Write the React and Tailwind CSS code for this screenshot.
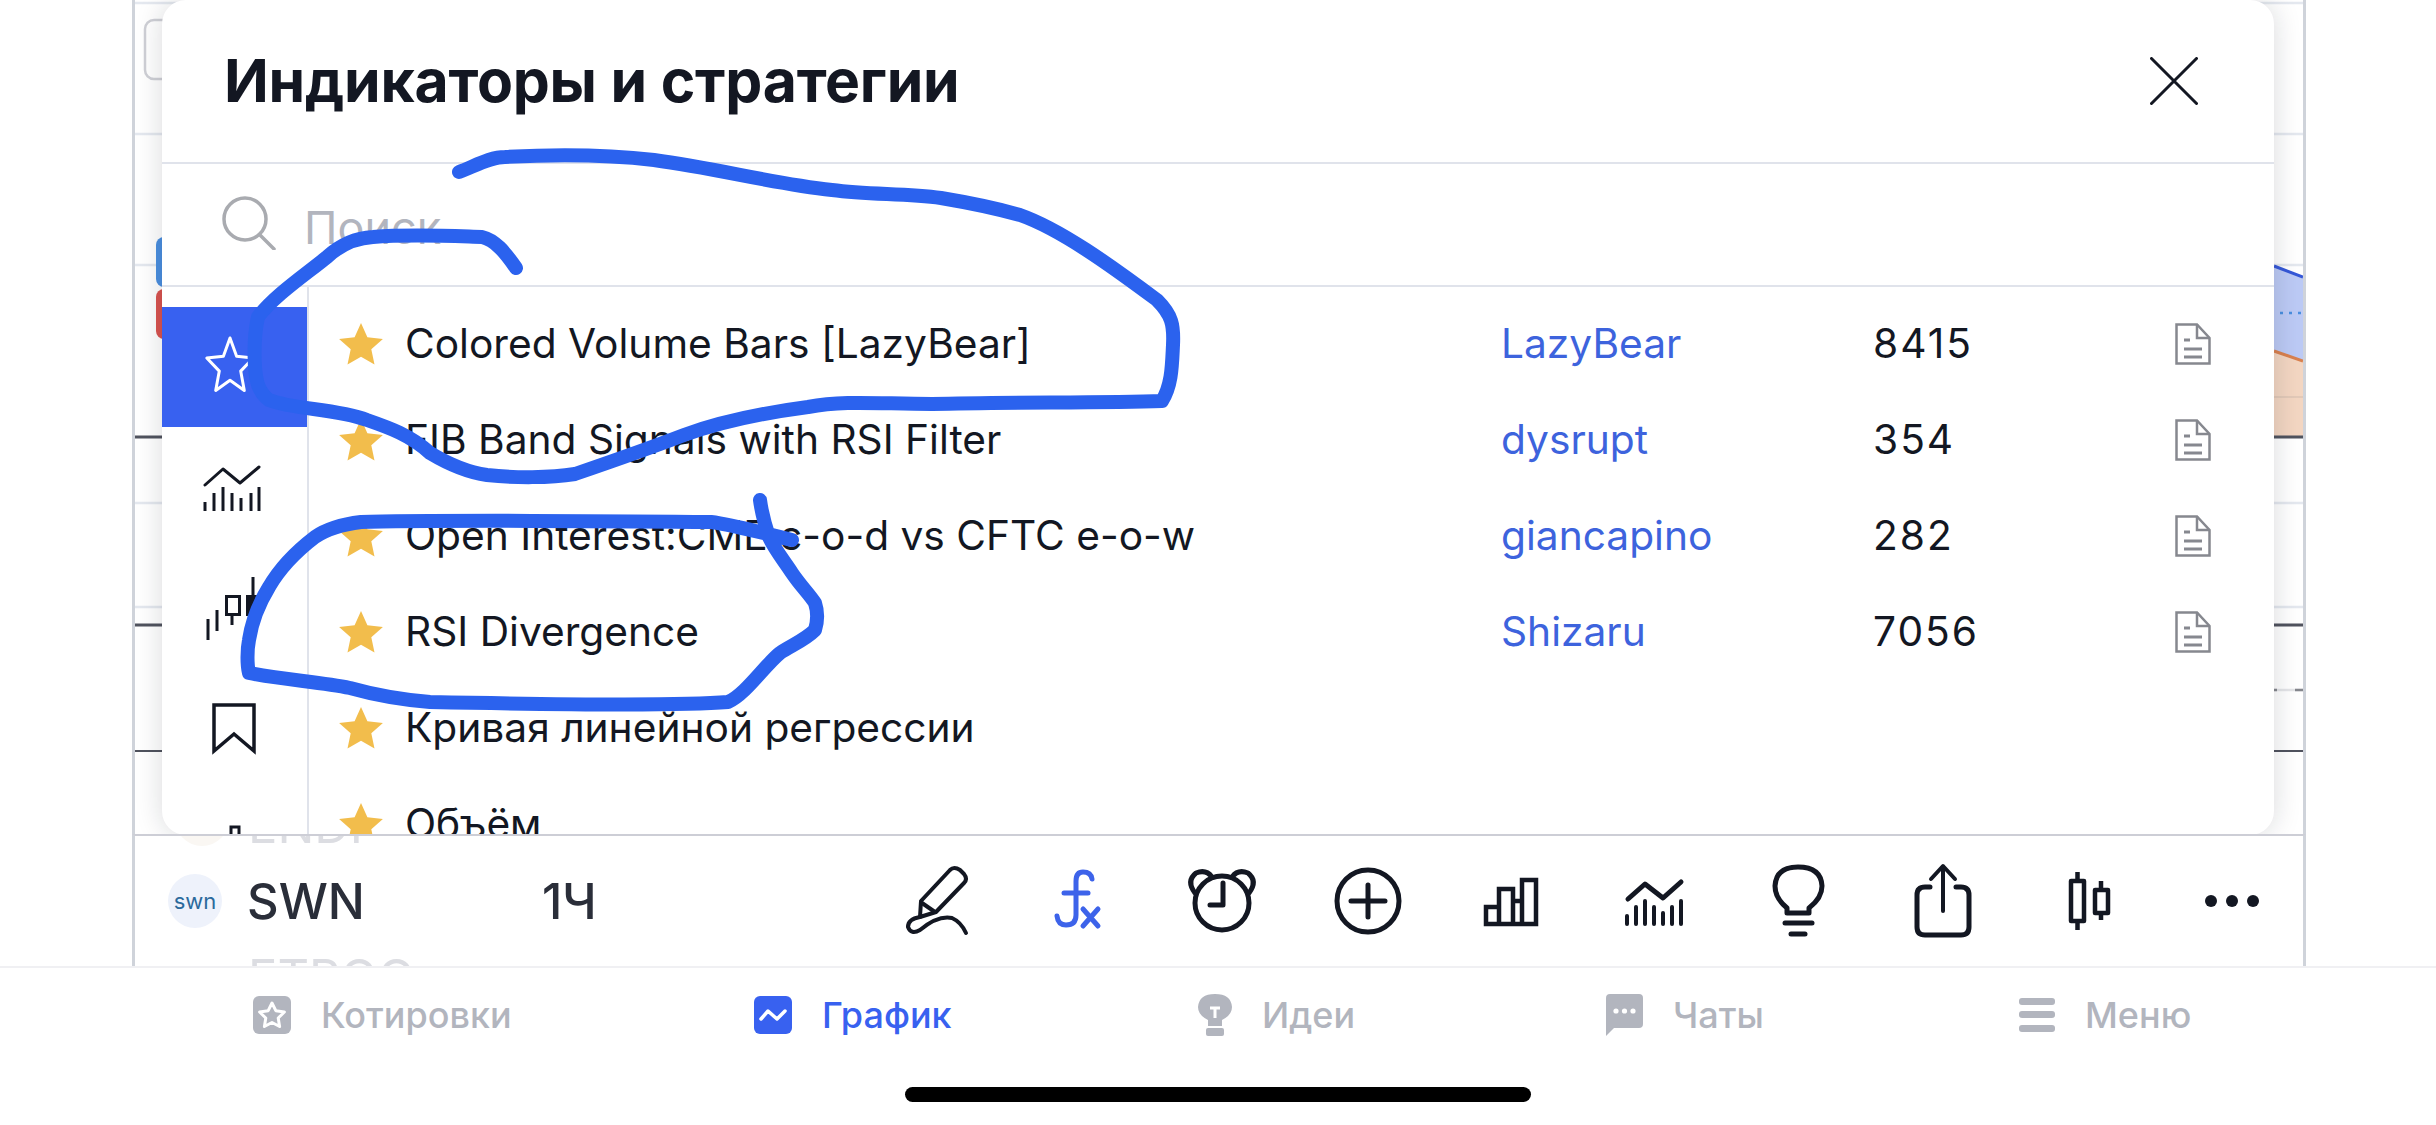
import React from "react";

const INK = "#131722";

function starPoints(cx, cy, R, r = 0.46, sx = 1) {
  const pts = [];
  for (let i = 0; i < 10; i++) {
    const rad = i % 2 === 0 ? R : R * r;
    const a = (-90 + 36 * i) * (Math.PI / 180);
    pts.push(`${(cx + sx * rad * Math.cos(a)).toFixed(1)},${(cy + rad * Math.sin(a)).toFixed(1)}`);
  }
  return pts.join(" ");
}

function FavStar() {
  return (
    <svg width="44" height="44" viewBox="0 0 44 44" className="shrink-0">
      <polygon points={starPoints(22, 24, 23, 0.47)} fill="#f2bd4c" />
    </svg>
  );
}

function DocIcon() {
  return (
    <svg width="36" height="42" viewBox="0 0 36 42" fill="none" stroke="#86888f" strokeWidth="2.5">
      <path d="M1.5 1.5H22L34.5 15V40.5H1.5Z" />
      <path d="M22 1.5V15H34.5" />
      <path d="M9 17h6M9 26h18M9 34h18" strokeWidth="3" />
    </svg>
  );
}

const rows = [
  ["Colored Volume Bars [LazyBear]", "LazyBear", "8415"],
  ["FIB Band Signals with RSI Filter", "dysrupt", "354"],
  ["Open Interest:CME c-o-d vs CFTC e-o-w", "giancapino", "282"],
  ["RSI Divergence", "Shizaru", "7056"],
  ["Кривая линейной регрессии"],
  ["Объём"],
];

function Row({ name, author, count }) {
  return (
    <div className="flex h-[96px] shrink-0 items-center pl-[30px] text-[40.7px] text-[#131722]">
      <FavStar />
      <div className="ml-[22px] w-[1096px] shrink-0 whitespace-nowrap">{name}</div>
      {author && <div className="w-[372px] shrink-0 text-[#3d63dd]">{author}</div>}
      {count && <div className="w-[302px] shrink-0 tracking-[2px]">{count}</div>}
      {author && <DocIcon />}
    </div>
  );
}

function SideCell({ y, children, active }) {
  return (
    <div className={`h-[120px] w-[145px] shrink-0 ${active ? "bg-[#3861f0]" : ""}`}>
      <svg width="145" height="120" viewBox={`162 ${y} 145 120`} fill="none" className="block">
        {children}
      </svg>
    </div>
  );
}

function Bars({ xs, tops, bottom, w }) {
  return xs.map((x, i) => (
    <line key={x} x1={x} x2={x} y1={tops[i]} y2={bottom} stroke={INK} strokeWidth={w} />
  ));
}

function Sidebar() {
  return (
    <div className="flex w-[147px] shrink-0 flex-col border-r-2 border-[#e0e3eb] pt-[20px]">
      <SideCell y={306} active>
        <polygon points={starPoints(230, 366, 29, 0.46, 0.84)} stroke="#fff" strokeWidth="3" strokeLinejoin="round" />
      </SideCell>
      <SideCell y={426}>
        <path d="M205 484L223 468L240 482L259 466" stroke={INK} strokeWidth="3" strokeLinejoin="round" strokeLinecap="round" />
        <Bars xs={[205, 214, 223, 232, 241, 251, 259]} tops={[501, 492, 486, 492, 497, 492, 486]} bottom={510} w={3} />
      </SideCell>
      <SideCell y={546}>
        <g stroke={INK} strokeWidth="3">
          <path d="M208 618V639M217 609V630M232 614V624M253 576V595" />
          <rect x="226.5" y="595.5" width="13" height="18" />
          <rect x="247.5" y="595.5" width="12" height="18" fill={INK} />
        </g>
      </SideCell>
      <SideCell y={666}>
        <path d="M214 704H254V750L234 733L214 750Z" stroke={INK} strokeWidth="3.5" />
      </SideCell>
      <SideCell y={786}>
        <rect x="231" y="826" width="8" height="14" stroke={INK} strokeWidth="3" />
      </SideCell>
    </div>
  );
}

function Modal() {
  return (
    <div className="absolute left-[27px] top-0 flex h-[835px] w-[2112px] flex-col overflow-hidden rounded-[24px] bg-white shadow-[0_0_28px_rgba(20,25,40,0.16)]">
      <div className="flex h-[164px] shrink-0 items-center justify-between border-b-2 border-[#e0e3eb] pl-[62px] pr-[76px]">
        <div className="text-[58.800px] font-bold leading-none tracking-[-0.2px] text-[#131722]">Индикаторы и стратегии</div>
        <svg width="48" height="48" viewBox="0 0 48 48" stroke={INK} strokeWidth="3" strokeLinecap="round">
          <path d="M1.5 1.5L46.5 46.5M46.5 1.5L1.5 46.5" />
        </svg>
      </div>
      <div className="flex h-[123px] shrink-0 items-center border-b-2 border-[#e0e3eb] pl-[60px]">
        <svg width="54" height="54" viewBox="0 0 54 54" fill="none" stroke="#a9abb0" strokeWidth="3.5" strokeLinecap="round" className="mt-[-4px]">
          <circle cx="23" cy="23" r="21" />
          <path d="M38 39L52 53" />
        </svg>
        <div className="ml-[28px] mt-[5px] text-[45px] leading-none text-[#b2b5be]">Поиск</div>
      </div>
      <div className="flex min-h-0 flex-1">
        <Sidebar />
        <div className="flex min-w-0 flex-1 flex-col pt-[9px]">
          {rows.map((r) => (
            <Row key={r[0]} name={r[0]} author={r[1]} count={r[2]} />
          ))}
        </div>
      </div>
    </div>
  );
}

function ToolCell({ i, children, stroke = INK }) {
  const x = 865 + 144 * i;
  return (
    <svg width="144" height="90" viewBox={`${x} 855 144 90`} fill="none" stroke={stroke} strokeWidth="5" strokeLinecap="round" strokeLinejoin="round" className="shrink-0">
      {children}
    </svg>
  );
}

function Toolbar() {
  return (
    <div className="relative z-10 ml-[132px] flex h-[132px] w-[2174px] shrink-0 items-center overflow-hidden border-x-[3px] border-t-2 border-x-[#cfd3da] border-t-[#cdced6] bg-white text-[49px] leading-none text-[#2a2e39]">
      <div className="absolute left-[113px] top-[-35px] text-[#dcdde2]">ENDF</div>
      <div className="absolute left-[113px] top-[117px] text-[#dcdde2]">ETPOO</div>
      <div className="absolute left-[40px] top-[-44px] h-[54px] w-[54px] rounded-full bg-[#faf7f3]" />
      <div className="relative ml-[33px] flex h-[54px] w-[54px] shrink-0 items-center justify-center rounded-full bg-[#eef2fb] text-[22px] text-[#2b6a9c]">swn</div>
      <div className="relative ml-[25px] w-[295px] shrink-0 font-medium">SWN</div>
      <div className="relative w-[323px] shrink-0 font-medium">1Ч</div>
      <ToolCell i={0}>
        <path d="M921 900L950 869Q954 865 960 869L964 873Q968 878 964 882L936 911L920 916Z" strokeWidth="4" />
        <path d="M922 902L935 911" strokeWidth="4" />
        <path d="M920 916Q908 918 908 926Q911 934 920 929Q938 914 952 917Q961 921 966 932" strokeWidth="4" />
      </ToolCell>
      <ToolCell i={1} stroke="#3d63ea">
        <path d="M1092 878Q1091 871 1083 871Q1076 871 1076 880V914Q1076 924 1066 924Q1058 924 1057 915" strokeWidth="5" />
        <path d="M1064 892H1088" strokeWidth="5" />
        <path d="M1083 908L1098 925M1098 908L1083 925" strokeWidth="5" />
      </ToolCell>
      <ToolCell i={2}>
        <ellipse cx="1222" cy="902" rx="27" ry="27" />
        <path d="M1223 882V904H1210" />
        <path d="M1195 892Q1186 880 1196 872Q1206 868 1212 876M1249 892Q1258 880 1248 872Q1238 868 1232 876" />
      </ToolCell>
      <ToolCell i={3}>
        <circle cx="1368" cy="900" r="31" />
        <path d="M1368 884V916M1351 900H1385" />
      </ToolCell>
      <ToolCell i={4}>
        <path d="M1486 923V906H1499V923ZM1499 923V888H1513V923ZM1522 923V879H1536V923ZM1486 923H1536M1513 900H1522" strokeWidth="4.5" strokeLinecap="butt" strokeLinejoin="miter" />
      </ToolCell>
      <ToolCell i={5}>
        <path d="M1628 898L1645 883L1663 897L1681 881" strokeWidth="5" />
        <Bars xs={[1627, 1636, 1645, 1654, 1663, 1672, 1681]} tops={[915, 906, 900, 906, 912, 906, 900]} bottom={923} w={4} />
      </ToolCell>
      <ToolCell i={6}>
        <path d="M1787 912V907Q1775 897 1775 885Q1776 866 1798 866Q1821 866 1822 885Q1822 897 1809 907V912Z" />
        <path d="M1785 922H1812" />
        <path d="M1791 933H1805" />
      </ToolCell>
      <ToolCell i={7}>
        <path d="M1930 886H1925Q1917 886 1917 894V926Q1917 934 1925 934H1961Q1969 934 1969 926V894Q1969 886 1961 886H1956" />
        <path d="M1943 910V866" strokeWidth="4" />
        <path d="M1931 878L1943 865L1955 878" strokeWidth="4" />
      </ToolCell>
      <ToolCell i={8}>
        <rect x="2071" y="880" width="13" height="40" strokeWidth="4.5" />
        <path d="M2077.500 871V880M2077.500 920V929M2101 880V889M2101 912V919" strokeWidth="4.5" strokeLinecap="butt" />
        <rect x="2095" y="889" width="13" height="23" strokeWidth="4.5" />
      </ToolCell>
      <ToolCell i={9}>
        <g fill={INK} stroke="none">
          <circle cx="2211" cy="900" r="6" />
          <circle cx="2232" cy="900" r="6" />
          <circle cx="2253" cy="900" r="6" />
        </g>
      </ToolCell>
    </div>
  );
}

function TabIcon({ w = 38, h = 38, children, view }) {
  return (
    <svg width={w} height={h} viewBox={view || `0 0 ${w} ${h}`} className="shrink-0">
      {children}
    </svg>
  );
}

function Tab({ icon, label, width, active }) {
  return (
    <div className={`flex shrink-0 items-center gap-[30px] ${width} ${active ? "text-[#3861f0]" : "text-[#b2b5be]"}`}>
      {icon}
      <span>{label}</span>
    </div>
  );
}

function TabBar() {
  const g = "#b2b5be";
  return (
    <div className="flex h-[159px] shrink-0 flex-col border-t-2 border-[#f0f0f3]">
      <div className="flex h-[93px] shrink-0 items-center pl-[253px] text-[36px] font-medium leading-none">
        <Tab
          width="w-[501px]"
          label="Котировки"
          icon={
            <TabIcon>
              <rect width="38" height="38" rx="6" fill={g} />
              <polygon points={starPoints(19, 20, 13, 0.5)} fill="none" stroke="#fff" strokeWidth="3" strokeLinejoin="round" />
            </TabIcon>
          }
        />
        <Tab
          width="w-[444px]"
          active
          label="График"
          icon={
            <TabIcon>
              <rect width="38" height="38" rx="6" fill="#3861f0" />
              <path d="M7 23L14 15L23 23L31 15" fill="none" stroke="#fff" strokeWidth="3.5" strokeLinecap="round" strokeLinejoin="round" />
            </TabIcon>
          }
        />
        <Tab
          width="w-[408px]"
          label="Идеи"
          icon={
            <TabIcon w={34} h={42}>
              <path d="M10 32V26Q0 21 0 13Q1 0 17 0Q33 0 34 13Q34 21 24 26V32Z" fill={g} />
              <rect x="8" y="34" width="18" height="8" rx="2" fill={g} />
              <path d="M12 14H22M17 14V24" stroke="#fff" strokeWidth="3" />
            </TabIcon>
          }
        />
        <Tab
          width="w-[413px]"
          label="Чаты"
          icon={
            <TabIcon w={37} h={42}>
              <path d="M4 0H33Q37 0 37 4V30Q37 34 33 34H8L0 42V4Q0 0 4 0Z" fill={g} />
              <g fill="#fff">
                <circle cx="10" cy="17" r="2.6" />
                <circle cx="18.500" cy="17" r="2.6" />
                <circle cx="27" cy="17" r="2.6" />
              </g>
            </TabIcon>
          }
        />
        <Tab
          width="w-[170px]"
          label="Меню"
          icon={
            <TabIcon w={36} h={34}>
              <g fill={g}>
                <rect width="36" height="7" rx="3" />
                <rect y="13" width="36" height="7" rx="3" />
                <rect y="27" width="36" height="7" rx="3" />
              </g>
            </TabIcon>
          }
        />
      </div>
      <div className="mx-auto mt-[26px] h-[15px] w-[626px] rounded-full bg-black" />
    </div>
  );
}

function ChartBack() {
  const light = "#e4e8ef";
  return (
    <svg width="2168" height="834" viewBox="135 0 2168 834" className="block">
      {[3, 134, 265, 503, 607].map((y) => (
        <line key={y} x1="135" x2="2303" y1={y} y2={y} stroke={light} strokeWidth="2.5" />
      ))}
      <polygon points="2274,266 2303,277 2303,361 2274,351" fill="#bccaf5" />
      <polygon points="2274,351 2303,361 2303,436 2274,436" fill="#f3d6c2" />
      <line x1="2274" x2="2303" y1="397" y2="397" stroke="#e2c9b8" strokeWidth="2" />
      <line x1="2274" x2="2303" y1="266" y2="277" stroke="#3558d8" strokeWidth="3" />
      <line x1="2274" x2="2303" y1="351" y2="361" stroke="#d9814f" strokeWidth="3" />
      <line x1="2280" x2="2303" y1="313" y2="313" stroke="#4a8fe0" strokeWidth="2.5" strokeDasharray="3 6" />
      <line x1="135" x2="2303" y1="437" y2="437" stroke="#50535e" strokeWidth="3" />
      <line x1="135" x2="2303" y1="625" y2="625" stroke="#50535e" strokeWidth="3" />
      <line x1="2274" x2="2303" y1="690" y2="690" stroke="#e4e5e8" strokeWidth="2.5" />
      <line x1="2274" x2="2277" y1="690" y2="690" stroke="#85878d" strokeWidth="2.5" />
      <line x1="2295" x2="2303" y1="690" y2="690" stroke="#85878d" strokeWidth="2.5" />
      <line x1="135" x2="2303" y1="751" y2="751" stroke="#50535e" strokeWidth="2" />
      <rect x="145" y="20" width="40" height="59" rx="9" fill="#fff" stroke="#cfd0d6" strokeWidth="2.5" />
      <rect x="156" y="237" width="30" height="50" rx="8" fill="#4a8fe0" />
      <rect x="156" y="289" width="30" height="50" rx="8" fill="#d9534f" />
    </svg>
  );
}

function Scribbles() {
  return (
    <svg width="2436" height="1125" viewBox="0 0 2436 1125" fill="none" stroke="#2b62ee" strokeWidth="14" strokeLinecap="round" strokeLinejoin="round" className="pointer-events-none absolute inset-0 z-20">
      <path d="M459 172C475 166 490 157 505 157C560 154 610 155 654 160C720 169 770 183 832 190C870 195 905 193 941 198C965 202 995 208 1020 215C1060 229 1110 265 1157 300C1172 315 1174 325 1173 345C1172 365 1172 385 1162 401C1100 403 1010 402 932 404C880 404 845 400 808 407C770 412 725 420 684 435C650 448 610 462 575 474C550 478 515 478 487 475C465 472 445 462 430 453C410 435 390 428 367 420C335 408 295 410 269 400C258 392 256 380 255 367C254 350 254 335 258 317C275 295 305 275 327 257C340 245 355 238 373 237C410 234 450 236 482 237C495 240 505 252 516 268" />
      <path d="M760 500C762 515 765 525 769 537C775 550 785 562 792 573C800 585 810 595 815 603C818 612 818 620 815 630C805 640 792 645 780 653C765 665 745 695 728 702C680 706 580 705 430 702C405 700 375 695 350 688C320 682 285 680 249 673C247 665 247 650 249 640C252 620 258 605 269 587C280 568 298 550 315 537C328 528 345 524 361 522C420 520 640 521 711 522C735 525 770 535 792 540" />
    </svg>
  );
}

export default function App() {
  return (
    <div className="relative flex h-[1125px] w-[2436px] flex-col overflow-hidden bg-white font-['Inter',sans-serif]">
      <div className="relative ml-[132px] h-[834px] w-[2174px] shrink-0 border-x-[3px] border-x-[#cfd3da]">
        <ChartBack />
        <Modal />
      </div>
      <Toolbar />
      <TabBar />
      <Scribbles />
    </div>
  );
}
